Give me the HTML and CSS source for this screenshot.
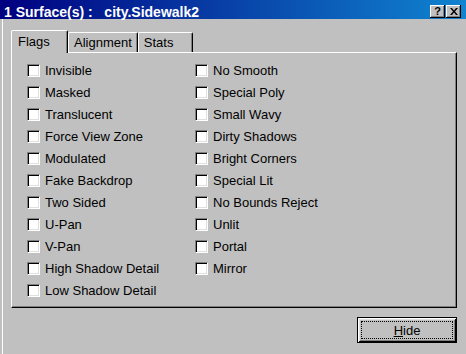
FILE: index.html
```html
<!DOCTYPE html>
<html lang="en">
<head>
    <meta charset="UTF-8">
    <title>1 Surface(s) : city.Sidewalk2</title>
    <link rel="stylesheet" href="styles.css">
</head>
<body>
    <div class="window">
        <div class="titlebar">
            <span class="title">1 Surface(s) :   city.Sidewalk2</span>
            <span class="caption-btn help">?</span>
            <span class="caption-btn close">
                <svg width="8" height="7" viewBox="0 0 8 7">
                    <path d="M0 0h2l2 2.5l2-2.5h2l-3 3.5l3 3.5h-2l-2-2.5l-2 2.5h-2l3-3.5z" fill="#000"/>
                </svg>
            </span>
        </div>
        <div class="client">
            <div class="tabs">
                <div class="tab active">Flags</div>
                <div class="tab">Alignment</div>
                <div class="tab">Stats</div>
            </div>
            <div class="panel">
                <div class="col">
                    <label class="check"><span class="box"></span>Invisible</label>
                    <label class="check"><span class="box"></span>Masked</label>
                    <label class="check"><span class="box"></span>Translucent</label>
                    <label class="check"><span class="box"></span>Force View Zone</label>
                    <label class="check"><span class="box"></span>Modulated</label>
                    <label class="check"><span class="box"></span>Fake Backdrop</label>
                    <label class="check"><span class="box"></span>Two Sided</label>
                    <label class="check"><span class="box"></span>U-Pan</label>
                    <label class="check"><span class="box"></span>V-Pan</label>
                    <label class="check"><span class="box"></span>High Shadow Detail</label>
                    <label class="check"><span class="box"></span>Low Shadow Detail</label>
                </div>
                <div class="col">
                    <label class="check"><span class="box"></span>No Smooth</label>
                    <label class="check"><span class="box"></span>Special Poly</label>
                    <label class="check"><span class="box"></span>Small Wavy</label>
                    <label class="check"><span class="box"></span>Dirty Shadows</label>
                    <label class="check"><span class="box"></span>Bright Corners</label>
                    <label class="check"><span class="box"></span>Special Lit</label>
                    <label class="check"><span class="box"></span>No Bounds Reject</label>
                    <label class="check"><span class="box"></span>Unlit</label>
                    <label class="check"><span class="box"></span>Portal</label>
                    <label class="check"><span class="box"></span>Mirror</label>
                </div>
            </div>
            <div class="actions">
                <button class="btn default"><span class="focus"><u>H</u>ide</span></button>
            </div>
        </div>
    </div>
</body>
</html>
```

FILE: styles.css
```css
body {
    margin: 0;
    background: #c0c0c0;
    font-family: "Liberation Sans", Arial, sans-serif;
    font-size: 13px;
    color: #000;
}

.window {
    width: 466px;
    height: 354px;
    overflow: hidden;
}

.titlebar {
    height: 19px;
    box-sizing: border-box;
    display: flex;
    align-items: flex-start;
    padding: 4px 5px 0 4px;
    background: linear-gradient(to right, #000080, #1084d0);
    color: #fff;
}

.title {
    flex: 1;
    font-size: 14px;
    font-weight: bold;
    line-height: 16px;
    white-space: pre;
}

.caption-btn {
    width: 15px;
    height: 13px;
    margin-top: 1px;
    box-sizing: border-box;
    display: flex;
    align-items: center;
    justify-content: center;
    background: #c0c0c0;
    color: #000;
    font-size: 11px;
    font-weight: bold;
    line-height: 1;
    box-shadow: inset -1px -1px #000, inset 1px 1px #fff, inset -2px -2px #808080;
}

.close {
    margin-left: 1px;
}

.client {
    height: 335px;
    box-sizing: border-box;
    margin-left: 2px;
    border-left: 1px solid #fff;
    padding: 11px 9px 0 8px;
}

.tabs {
    display: flex;
    align-items: flex-end;
    height: 23px;
    margin-bottom: -1px;
    position: relative;
    z-index: 1;
}

.tab {
    height: 20px;
    min-width: 55px;
    margin-bottom: 1px;
    box-sizing: border-box;
    padding: 2px 5px 0 5px;
    line-height: 15px;
    border-top: 1px solid #fff;
    border-left: 1px solid #fff;
    border-right: 1px solid #000;
    border-radius: 2px 2px 0 0;
    box-shadow: inset -1px 0 #808080;
}

.tab.active {
    height: 23px;
    min-width: 57px;
    margin-bottom: 0;
    padding: 3px 5px 0 6px;
    background: #c0c0c0;
}

.panel {
    height: 256px;
    box-sizing: border-box;
    display: flex;
    padding: 6px 0 0 15px;
    border: 1px solid;
    border-color: #fff #000 #000 #fff;
    box-shadow: inset -1px -1px #808080;
}

.col:first-child {
    width: 168px;
}

.check {
    display: flex;
    align-items: center;
    height: 22px;
}

.box {
    flex: none;
    width: 13px;
    height: 13px;
    box-sizing: border-box;
    margin-right: 5px;
    background: #fff;
    border: 1px solid;
    border-color: #808080 #fff #fff #808080;
    box-shadow: inset 1px 1px #000, inset -1px -1px #dfdfdf;
}

.actions {
    display: flex;
    justify-content: flex-end;
    padding-top: 9px;
}

.btn {
    width: 100px;
    height: 26px;
    padding: 3px;
    border: 1px solid #000;
    background: #c0c0c0;
    font: 13px "Liberation Sans", Arial, sans-serif;
    color: #000;
    box-shadow: inset 1px 1px #fff, inset -1px -1px #000, inset 2px 2px #dfdfdf, inset -2px -2px #808080;
}

.focus {
    display: flex;
    align-items: center;
    justify-content: center;
    height: 100%;
    box-sizing: border-box;
    border: 1px dotted #000;
}
```
